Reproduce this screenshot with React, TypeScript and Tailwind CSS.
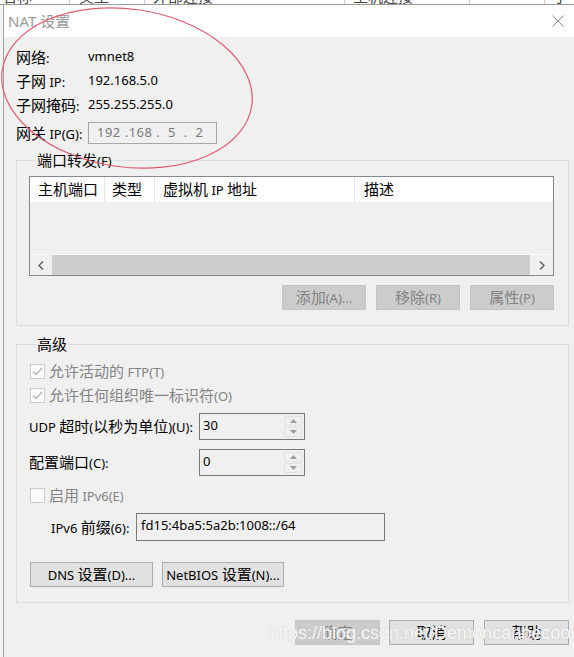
import React from 'react';

// CJK runs are drawn a bit larger than the latin text, as in the dialog
const cjk = /([\u2E80-\u9FFF\uFF00-\uFFEF]+)/;

const T = ({ s }: { s: string }) => (
    <span className="whitespace-pre">
        {s.split(cjk).map((p, i) =>
            i % 2 ? (
                <span key={i} className="text-[15px]">{p}</span>
            ) : (
                <React.Fragment key={i}>{p}</React.Fragment>
            )
        )}
    </span>
);

const Check = ({ checked }: { checked?: boolean }) => (
    <div className="w-[15px] h-[15px] border border-[#cccccc] bg-[#fbfbfb] flex items-center justify-center">
        {checked && (
            <svg width="11" height="9" viewBox="0 0 11 9">
                <path d="M1 4.5 L4 7.5 L10 1" stroke="#b4b4b4" strokeWidth="1.3" fill="none" />
            </svg>
        )}
    </div>
);

const Spin = ({ value }: { value: string }) => (
    <div className="flex w-[106px] h-[27px] border border-[#7a7a7a] bg-[#f0f0f0]">
        <div className="flex-1 pl-[3px] pt-[3px] leading-[16px]">{value}</div>
        <div className="w-[18px] my-[2px] mr-[2px] flex flex-col gap-[1px]">
            <div className="flex-1 flex items-center justify-center border border-[#e2e2e2]">
                <svg width="7" height="4" viewBox="0 0 7 4">
                    <path d="M0 4 L3.5 0 L7 4Z" fill="#9c9c9c" />
                </svg>
            </div>
            <div className="flex-1 flex items-center justify-center border border-[#e2e2e2]">
                <svg width="7" height="4" viewBox="0 0 7 4">
                    <path d="M0 0 L3.5 4 L7 0Z" fill="#9c9c9c" />
                </svg>
            </div>
        </div>
    </div>
);

const Btn = ({ label, w, disabled }: { label: string; w: string; disabled?: boolean }) => (
    <div
        className={
            (disabled
                ? 'bg-[#cccccc] border-[#c4c4c4] text-[#838383] '
                : 'bg-[#e1e1e1] border-[#adadad] text-black ') +
            w +
            ' h-[25px] border flex items-center justify-center'
        }
    >
        <T s={label} />
    </div>
);

const App = () => {
    return (
        <div className="relative w-[574px] h-[657px] overflow-hidden bg-[#f0f0f0] text-[13px] text-black font-['Noto_Sans','Noto_Sans_CJK_SC',sans-serif]">
            {/* list header of the window behind the dialog */}
            <div className="flex h-[5px] overflow-hidden bg-white border-b border-[#9d9d9d] text-[15px] leading-[15px] text-[#444444]">
                <div className="w-[70px] border-r border-[#c8c8c8] pl-[2px] -mt-[11px]">名称</div>
                <div className="w-[75px] border-r border-[#c8c8c8] pl-[9px] -mt-[11px]">类型</div>
                <div className="w-[200px] border-r border-[#c8c8c8] pl-[8px] -mt-[11px]">外部连接</div>
                <div className="w-[125px] border-r border-[#c8c8c8] pl-[8px] -mt-[11px]">主机连接</div>
                <div className="w-[75px] border-r border-[#c8c8c8] -mt-[11px]" />
                <div className="flex-1 pl-[8px] -mt-[11px]">子网地址</div>
            </div>

            <div className="flex">
                <div className="w-[4px] h-[652px] bg-[#f4f4f4] border-r border-[#a0a0a0]" />

                <div className="flex-1">
                    {/* title bar */}
                    <div className="flex items-center justify-between h-[32px] bg-white pl-[4px] pr-[10px]">
                        <span className="text-[15px] text-[#9a9a9a]">NAT 设置</span>
                        <svg width="12" height="12" viewBox="0 0 12 12">
                            <path d="M0.5 0.5 L11.5 11.5 M11.5 0.5 L0.5 11.5" stroke="#8a8a8a" strokeWidth="1" />
                        </svg>
                    </div>

                    <div className="pl-[12px] pt-[8px]">
                        {/* network info */}
                        <div className="flex items-center h-[24px]">
                            <div className="w-[72px]"><T s="网络:" /></div>
                            <div>vmnet8</div>
                        </div>
                        <div className="flex items-center h-[24px]">
                            <div className="w-[72px]"><T s="子网 IP:" /></div>
                            <div>192.168.5.0</div>
                        </div>
                        <div className="flex items-center h-[24px]">
                            <div className="w-[72px]"><T s="子网掩码:" /></div>
                            <div>255.255.255.0</div>
                        </div>
                        <div className="flex items-center h-[22px] mt-[5px]">
                            <div className="w-[72px]"><T s="网关 IP(G):" /></div>
                            <div className="w-[129px] h-[22px] border border-[#a8a8a8] pl-[8px] flex items-center text-[#7a7a7a] whitespace-pre tracking-[0.5px]">
                                192 .168 .  5  .  2
                            </div>
                        </div>

                        {/* port forwarding */}
                        <fieldset className="w-[553px] mt-[6px] border border-[#dcdcdc] px-[12px] pb-[15px]">
                            <legend className="ml-[7px] px-[1px] leading-[20px]"><T s="端口转发(F)" /></legend>
                            <div className="w-[525px] h-[100px] mt-[5px] border border-[#828790] flex flex-col">
                                <div className="flex h-[25px] bg-white">
                                    <div className="w-[75px] border-r border-[#e5e5e5] pl-[8px] flex items-center"><T s="主机端口" /></div>
                                    <div className="w-[50px] border-r border-[#e5e5e5] pl-[7px] flex items-center"><T s="类型" /></div>
                                    <div className="w-[200px] border-r border-[#e5e5e5] pl-[8px] flex items-center"><T s="虚拟机 IP 地址" /></div>
                                    <div className="flex-1 pl-[9px] flex items-center"><T s="描述" /></div>
                                </div>
                                <div className="flex-1 bg-[#f0f0f0]" />
                                <div className="flex h-[21px] bg-[#f0f0f0] border-t border-[#fafafa]">
                                    <div className="w-[22px] flex items-center justify-center">
                                        <svg width="6" height="9" viewBox="0 0 6 9">
                                            <path d="M5 0.5 L1 4.5 L5 8.5" stroke="#606060" strokeWidth="1.5" fill="none" />
                                        </svg>
                                    </div>
                                    <div className="flex-1 bg-[#cdcdcd]" />
                                    <div className="w-[23px] flex items-center justify-center">
                                        <svg width="6" height="9" viewBox="0 0 6 9">
                                            <path d="M1 0.5 L5 4.5 L1 8.5" stroke="#606060" strokeWidth="1.5" fill="none" />
                                        </svg>
                                    </div>
                                </div>
                            </div>
                            <div className="flex justify-end gap-[10px] mt-[9px] w-[525px]">
                                <Btn label="添加(A)..." w="w-[84px]" disabled />
                                <Btn label="移除(R)" w="w-[84px]" disabled />
                                <Btn label="属性(P)" w="w-[84px]" disabled />
                            </div>
                        </fieldset>

                        {/* advanced */}
                        <fieldset className="w-[553px] mt-[8px] border border-[#dcdcdc] pl-[12px] pb-[15px]">
                            <legend className="ml-[7px] px-[1px] leading-[20px]"><T s="高级" /></legend>
                            <div className="flex items-center h-[20px] mt-[6px] pl-[1px] gap-[4px] text-[#838383]">
                                <Check checked />
                                <T s="允许活动的 FTP(T)" />
                            </div>
                            <div className="flex items-center h-[20px] mt-[4px] pl-[1px] gap-[4px] text-[#838383]">
                                <Check checked />
                                <T s="允许任何组织唯一标识符(O)" />
                            </div>
                            <div className="flex items-center mt-[8px]">
                                <div className="w-[170px]"><T s="UDP 超时(以秒为单位)(U):" /></div>
                                <Spin value="30" />
                            </div>
                            <div className="flex items-center mt-[9px]">
                                <div className="w-[170px]"><T s="配置端口(C):" /></div>
                                <Spin value="0" />
                            </div>
                            <div className="flex items-center h-[20px] mt-[9px] pl-[1px] gap-[4px] text-[#838383]">
                                <Check />
                                <T s="启用 IPv6(E)" />
                            </div>
                            <div className="flex items-center mt-[8px] pl-[22px]">
                                <div className="w-[85px]"><T s="IPv6 前缀(6):" /></div>
                                <div className="w-[249px] h-[28px] border border-[#7a7a7a] pl-[4px] pt-[2px] leading-[18px]">
                                    fd15:4ba5:5a2b:1008::/64
                                </div>
                            </div>
                            <div className="flex gap-[9px] mt-[21px] pl-[1px]">
                                <Btn label="DNS 设置(D)..." w="w-[123px]" />
                                <Btn label="NetBIOS 设置(N)..." w="w-[122px]" />
                            </div>
                        </fieldset>

                        {/* dialog buttons */}
                        <div className="flex justify-end w-[553px] mt-[17px]">
                            <div className="mr-[9px]"><Btn label="确定" w="w-[85px]" disabled /></div>
                            <div className="mr-[10px]"><Btn label="取消" w="w-[85px]" /></div>
                            <Btn label="帮助" w="w-[85px]" />
                        </div>
                    </div>
                </div>
            </div>

            {/* hand-drawn annotation */}
            <svg className="absolute left-0 top-0 pointer-events-none" width="574" height="657">
                <ellipse cx="127" cy="88" rx="126" ry="79" transform="rotate(8 127 88)" fill="none" stroke="#e05a6e" strokeWidth="1.2" />
            </svg>

            {/* watermark */}
            <div className="absolute left-[268px] top-[622px] leading-[22px] text-[18px] text-white/90 font-['Liberation_Sans',sans-serif] [text-shadow:0_0_1px_#b4b4b4] pointer-events-none">
                https://blog.csdn.net/Demoncanbecool
            </div>
        </div>
    );
};

export default App;
